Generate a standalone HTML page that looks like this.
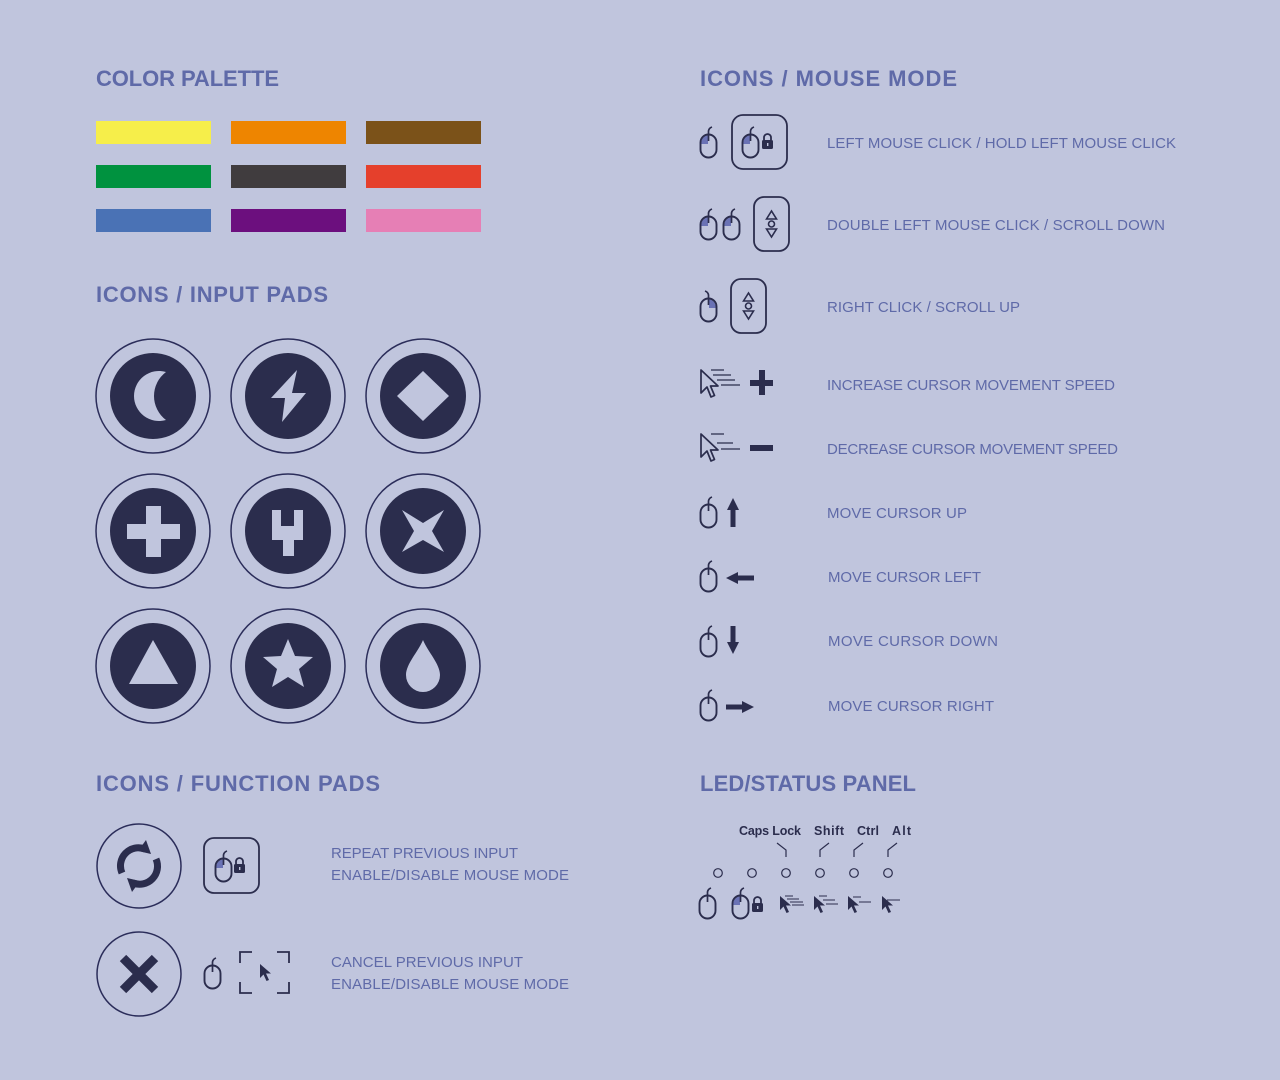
<!DOCTYPE html>
<html><head><meta charset="utf-8"><style>
html,body{margin:0;padding:0;background:#c0c5dd;}
svg{display:block}
.h{font-family:"Liberation Sans",sans-serif;font-size:22px;font-weight:bold;fill:#5f6aa8;}
.t{font-family:"Liberation Sans",sans-serif;font-size:15px;fill:#5f6aa8;}
.k{font-family:"Liberation Sans",sans-serif;font-size:12.5px;font-weight:bold;fill:#2b2d4d;}
</style></head><body>
<svg width="1280" height="1080" viewBox="0 0 1280 1080">
<defs>
<g id="mouse">
<rect x="0.5" y="7.5" width="16" height="23" rx="8" fill="none" stroke="#2b2d4d" stroke-width="1.9"/>
<path d="M8.5 7.5 V4 Q9 1 12 0" fill="none" stroke="#2b2d4d" stroke-width="1.7"/>
<path d="M8.5 7.5 v6.5" stroke="#2b2d4d" stroke-width="1.7"/>
</g>
<g id="mouseL">
<path d="M8 8.5 A7 7 0 0 0 1.4 15 V17 H8 Z" fill="#6a72b5"/>
<use href="#mouse"/>
</g>
<g id="lock">
<path d="M2 7 V4.5 A3.5 3.5 0 0 1 9 4.5 V7" fill="none" stroke="#2b2d4d" stroke-width="1.8"/>
<rect x="0" y="7" width="11" height="9" rx="1.5" fill="#2b2d4d"/>
<rect x="5" y="10" width="1.4" height="3" fill="#c0c5dd"/>
</g>
<g id="arrowscroll">
<path d="M0 8 L5 0 L10 8 Z" fill="none" stroke="#2b2d4d" stroke-width="1.6"/>
<circle cx="5" cy="13" r="3" fill="none" stroke="#2b2d4d" stroke-width="1.6"/>
<path d="M0 18 L5 26 L10 18 Z" fill="none" stroke="#2b2d4d" stroke-width="1.6"/>
</g>
<g id="cursorO">
<path d="M1 1 L1 24 L7 18 L11 28 L14.5 26.5 L10.5 17 L18 17 Z" fill="none" stroke="#2b2d4d" stroke-width="1.7" stroke-linejoin="round"/>
</g>
<g id="cursorF">
<path d="M1 1 L1 15 L4.5 11.5 L7.5 18 L10 17 L7 10.5 L12 10.5 Z" fill="#2b2d4d"/>
</g>
</defs>

<text class="h" x="96" y="86" textLength="183">COLOR PALETTE</text>
<text class="h" x="96" y="302" textLength="232">ICONS / INPUT PADS</text>
<text class="h" x="96" y="791" textLength="284">ICONS / FUNCTION PADS</text>
<text class="h" x="700" y="86" textLength="257">ICONS / MOUSE MODE</text>
<text class="h" x="700" y="791" textLength="216">LED/STATUS PANEL</text>

<rect x="96" y="121" width="115" height="23" fill="#f6ee4a"/>
<rect x="231" y="121" width="115" height="23" fill="#ee8500"/>
<rect x="366" y="121" width="115" height="23" fill="#7b5219"/>
<rect x="96" y="165" width="115" height="23" fill="#00923f"/>
<rect x="231" y="165" width="115" height="23" fill="#403c3e"/>
<rect x="366" y="165" width="115" height="23" fill="#e5402c"/>
<rect x="96" y="209" width="115" height="23" fill="#4a72b5"/>
<rect x="231" y="209" width="115" height="23" fill="#6c0f7e"/>
<rect x="366" y="209" width="115" height="23" fill="#e67fb5"/>

<g fill="none" stroke="#2b2d5a" stroke-width="1.5">
<circle cx="153" cy="396" r="57"/><circle cx="288" cy="396" r="57"/><circle cx="423" cy="396" r="57"/>
<circle cx="153" cy="531" r="57"/><circle cx="288" cy="531" r="57"/><circle cx="423" cy="531" r="57"/>
<circle cx="153" cy="666" r="57"/><circle cx="288" cy="666" r="57"/><circle cx="423" cy="666" r="57"/>
</g>
<g fill="#2b2d4d">
<circle cx="153" cy="396" r="43"/><circle cx="288" cy="396" r="43"/><circle cx="423" cy="396" r="43"/>
<circle cx="153" cy="531" r="43"/><circle cx="288" cy="531" r="43"/><circle cx="423" cy="531" r="43"/>
<circle cx="153" cy="666" r="43"/><circle cx="288" cy="666" r="43"/><circle cx="423" cy="666" r="43"/>
</g>
<g fill="#c0c5dd">
<path d="M166 372 A25 25 0 1 0 166 420 A30 30 0 0 1 166 372 Z"/>
<path d="M297 370 L271 398 L285 398 L282 422 L306 393 L292 393 Z"/>
<path d="M423 371 L449 396 L423 421 L397 396 Z"/>
<path d="M146 506 H161 V524 H180 V539 H161 V557 H146 V539 H127 V524 H146 Z"/>
<path d="M272 510 H281 V526 H294 V510 H303 V540 H294 V556 H283 V540 H272 Z"/>
<path d="M402 510 L423 523 L444 510 L432 531 L444 552 L423 540 L402 552 L414 531 Z"/>
<path d="M153 640 L178 684 L129 684 Z"/>
<path d="M288 639 L295 656 L313 657 L299 669 L304 687 L288 677 L272 687 L277 669 L263 657 L281 656 Z"/>
<path d="M423 640 C418 652 406 664 406 675 A17 17 0 0 0 440 675 C440 664 428 652 423 640 Z"/>
</g>

<circle cx="139" cy="866" r="42" fill="none" stroke="#2b2d5a" stroke-width="1.5"/>
<circle cx="139" cy="974" r="42" fill="none" stroke="#2b2d5a" stroke-width="1.5"/>
<g fill="none" stroke="#2b2d4d" stroke-width="7">
<path d="M122 873 A18 18 0 0 1 145 849"/>
<path d="M156 859 A18 18 0 0 1 133 883"/>
</g>
<path d="M146 840 L138 851 L151 854 Z" fill="#2b2d4d"/>
<path d="M132 892 L140 881 L127 878 Z" fill="#2b2d4d"/>
<path d="M123 958 L155 990 M155 958 L123 990" stroke="#2b2d4d" stroke-width="9"/>
<rect x="204" y="838" width="55" height="55" rx="10" fill="none" stroke="#2b2d4d" stroke-width="1.8"/>
<use href="#mouseL" x="215" y="851"/>
<use href="#lock" x="234" y="857"/>
<use href="#mouse" x="204" y="958"/>
<g fill="none" stroke="#2b2d4d" stroke-width="1.8">
<path d="M240 963 V952 H252 M277 952 H289 V963 M240 982 V993 H252 M277 993 H289 V982"/>
</g>
<use href="#cursorF" x="259" y="963"/>
<text class="t" x="331" y="858" textLength="187">REPEAT PREVIOUS INPUT</text>
<text class="t" x="331" y="880" textLength="238">ENABLE/DISABLE MOUSE MODE</text>
<text class="t" x="331" y="967" textLength="192">CANCEL PREVIOUS INPUT</text>
<text class="t" x="331" y="989" textLength="238">ENABLE/DISABLE MOUSE MODE</text>

<use href="#mouseL" x="700" y="127"/>
<rect x="732" y="115" width="55" height="54" rx="11" fill="none" stroke="#2b2d4d" stroke-width="1.8"/>
<use href="#mouseL" x="742" y="127"/>
<use href="#lock" x="762" y="133"/>
<text class="t" x="827" y="148" textLength="349">LEFT MOUSE CLICK / HOLD LEFT MOUSE CLICK</text>

<use href="#mouseL" x="700" y="209"/>
<use href="#mouseL" x="723" y="209"/>
<rect x="754" y="197" width="35" height="54" rx="10" fill="none" stroke="#2b2d4d" stroke-width="1.8"/>
<use href="#arrowscroll" x="766.5" y="211"/>
<text class="t" x="827" y="230" textLength="338">DOUBLE LEFT MOUSE CLICK / SCROLL DOWN</text>

<use href="#mouseL" x="700" y="291" transform="translate(1417,0) scale(-1,1)"/>
<rect x="731" y="279" width="35" height="54" rx="10" fill="none" stroke="#2b2d4d" stroke-width="1.8"/>
<use href="#arrowscroll" x="743.5" y="293"/>
<text class="t" x="827" y="312" textLength="193">RIGHT CLICK / SCROLL UP</text>

<use href="#cursorO" x="700" y="369"/>
<g stroke="#2b2d4d" stroke-width="1.3">
<path d="M711 370 H724 M713 375 H731 M717 380 H735 M721 385 H740"/>
<path d="M711 434 H724 M717 443 H733 M721 449 H740"/>
</g>
<path d="M759 370 H765 V380 H773 V386 H765 V395 H759 V386 H750 V380 H759 Z" fill="#2b2d4d"/>
<text class="t" x="827" y="390" textLength="288">INCREASE CURSOR MOVEMENT SPEED</text>
<use href="#cursorO" x="700" y="433"/>
<rect x="750" y="445" width="23" height="6" fill="#2b2d4d"/>
<text class="t" x="827" y="454" textLength="291">DECREASE CURSOR MOVEMENT SPEED</text>

<use href="#mouse" x="700" y="497"/>
<path d="M733 498 L739 510 H735.5 V527 H730.5 V510 H727 Z" fill="#2b2d4d"/>
<text class="t" x="827" y="518" textLength="140">MOVE CURSOR UP</text>
<use href="#mouse" x="700" y="561"/>
<path d="M726 578 L738 572 V575.5 H754 V580.5 H738 V584 Z" fill="#2b2d4d"/>
<text class="t" x="828" y="582" textLength="153">MOVE CURSOR LEFT</text>
<use href="#mouse" x="700" y="626"/>
<path d="M733 654 L739 642 H735.5 V626 H730.5 V642 H727 Z" fill="#2b2d4d"/>
<text class="t" x="828" y="646" textLength="170">MOVE CURSOR DOWN</text>
<use href="#mouse" x="700" y="690"/>
<path d="M754 707 L742 701 V704.5 H726 V709.5 H742 V713 Z" fill="#2b2d4d"/>
<text class="t" x="828" y="711" textLength="166">MOVE CURSOR RIGHT</text>

<text class="k" x="739" y="835" textLength="62">Caps Lock</text>
<text class="k" x="814" y="835" textLength="30">Shift</text>
<text class="k" x="857" y="835" textLength="22">Ctrl</text>
<text class="k" x="892" y="835" textLength="19">Alt</text>
<g fill="none" stroke="#2b2d4d" stroke-width="1.2">
<path d="M777 843 L786 850 V857"/>
<path d="M829 843 L820 850 V857"/>
<path d="M863 843 L854 850 V857"/>
<path d="M897 843 L888 850 V857"/>
<circle cx="718" cy="873" r="4.3"/><circle cx="752" cy="873" r="4.3"/><circle cx="786" cy="873" r="4.3"/>
<circle cx="820" cy="873" r="4.3"/><circle cx="854" cy="873" r="4.3"/><circle cx="888" cy="873" r="4.3"/>
</g>
<use href="#mouse" x="699" y="888"/>
<use href="#mouseL" x="732" y="888"/>
<use href="#lock" x="752" y="896"/>
<use href="#cursorF" x="779" y="895"/>
<use href="#cursorF" x="813" y="895"/>
<use href="#cursorF" x="847" y="895"/>
<use href="#cursorF" x="881" y="895"/>
<g stroke="#2b2d4d" stroke-width="1">
<path d="M785 896 H793 M787 899 H799 M790 902 H803 M792 905 H804"/>
<path d="M819 896 H827 M823 900 H835 M826 904 H838"/>
<path d="M853 897 H861 M859 902 H871"/>
<path d="M887 900 H900"/>
</g>
</svg>
</body></html>
